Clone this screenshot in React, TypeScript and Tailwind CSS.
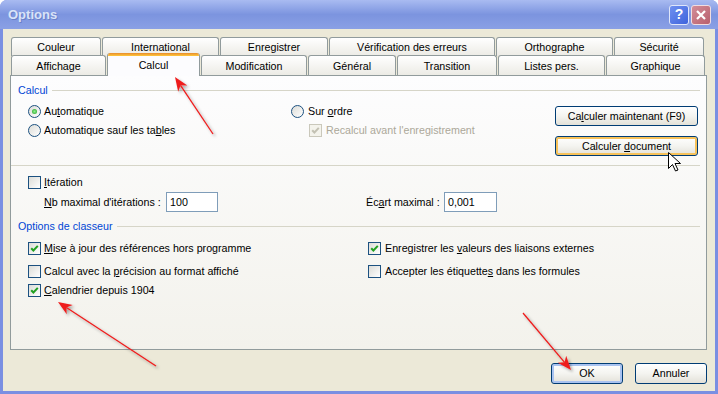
import React from "react";

function Box({ checked = false, disabled = false }: { checked?: boolean; disabled?: boolean }) {
  return (
    <span
      className={
        disabled
          ? "relative block w-[13px] h-[13px] shrink-0 border border-[#cac8bb] bg-[#f4f3ec]"
          : "relative block w-[13px] h-[13px] shrink-0 border border-[#1c5180] bg-gradient-to-br from-[#dcdcd7] to-white"
      }
    >
      {checked && (
        <svg className="absolute left-0 top-0" width="11" height="11" viewBox="0 0 11 11">
          <path
            d="M2.2 5.2 L4.4 7.5 L8.8 2.9"
            fill="none"
            stroke={disabled ? "#c3c1b3" : "#21a121"}
            strokeWidth="2"
          />
        </svg>
      )}
    </span>
  );
}

function Radio({ checked = false }: { checked?: boolean }) {
  return (
    <span className="relative block w-[13px] h-[13px] shrink-0 rounded-full border border-[#1c5180] bg-gradient-to-br from-[#dcdcd7] to-white">
      {checked && (
        <span className="absolute left-[3px] top-[3px] w-[5px] h-[5px] rounded-full bg-[radial-gradient(circle,#8ef08e,#1f9e1f)]" />
      )}
    </span>
  );
}

function Tab({ label, w, selected = false }: { label: string; w: string; selected?: boolean }) {
  if (selected) {
    return (
      <div className={`${w} relative z-20 h-[23px] -mb-[1px] shrink-0 flex flex-col rounded-t-[3px] overflow-hidden border-x border-[#919b9c] bg-[#fcfcfe]`}>
        <div className="h-[3px] bg-gradient-to-b from-[#e68b2c] to-[#ffc83c]" />
        <div className="flex-1 flex items-center justify-center pb-[1px]">{label}</div>
      </div>
    );
  }
  return (
    <div className={`${w} h-full shrink-0 flex items-center justify-center pt-[1px] rounded-t-[3px] border border-b-0 border-[#919b9c] bg-gradient-to-b from-white to-[#ecebe5]`}>
      {label}
    </div>
  );
}

function Btn({ children, cls }: { children: React.ReactNode; cls: string }) {
  return (
    <div className={`flex items-center justify-center rounded-[3px] border border-[#003c74] bg-gradient-to-b from-white via-[#f4f4f0] to-[#e3e1d8] ${cls}`}>
      {children}
    </div>
  );
}

function Arrow({ x1, y1, x2, y2 }: { x1: number; y1: number; x2: number; y2: number }) {
  const dx = x2 - x1;
  const dy = y2 - y1;
  const L = Math.hypot(dx, dy);
  const ux = dx / L;
  const uy = dy / L;
  const px = -uy;
  const py = ux;
  const hl = 14;
  const hw = 5.5;
  const bx = x2 - ux * hl;
  const by = y2 - uy * hl;
  const nx = x2 - ux * (hl - 4);
  const ny = y2 - uy * (hl - 4);
  const pts = `${x2},${y2} ${bx + px * hw},${by + py * hw} ${nx},${ny} ${bx - px * hw},${by - py * hw}`;
  return (
    <g filter="url(#sh)">
      <line x1={x1} y1={y1} x2={nx} y2={ny} stroke="#ee1c1c" strokeWidth="1.3" />
      <polygon points={pts} fill="#ee1c1c" />
    </g>
  );
}

export default function App() {
  return (
    <div className="relative w-[718px] h-[394px] flex flex-col overflow-hidden rounded-t-[7px] bg-[#7a8fe2] font-['Liberation_Sans',Arial,sans-serif] text-[10.7px] leading-[13px] text-black">
      {/* Title bar */}
      <div className="h-[29px] shrink-0 flex items-center pl-[8px] pr-[7px] bg-gradient-to-b from-[#a9bbf1] via-[#7c94df] to-[#8aa0e5]">
        <span className="font-bold text-[13px] text-[#d9e3f8] [text-shadow:1px_1px_0_#6a80c8]">Options</span>
        <div className="ml-auto flex gap-[2px]">
          <div className="w-[20px] h-[20px] rounded-[3px] border border-[#dfe6fa] bg-gradient-to-br from-[#6f90f0] to-[#3f63dc] flex items-center justify-center text-white font-bold text-[14px]">
            ?
          </div>
          <div className="w-[20px] h-[20px] rounded-[3px] border border-[#f0dde0] bg-gradient-to-br from-[#d38d98] to-[#b8606e] flex items-center justify-center">
            <svg width="12" height="12" viewBox="0 0 12 12">
              <path d="M2 2 L10 10 M10 2 L2 10" stroke="white" strokeWidth="2.2" />
            </svg>
          </div>
        </div>
      </div>

      {/* Client */}
      <div className="flex-1 mx-[3px] mb-[3px] bg-[#ece9d8] pt-[8px] pl-[7px] pr-[8px] flex flex-col">
        {/* Tabs */}
        <div className="pl-[1px] flex flex-col">
          <div className="flex gap-[1px] h-[19px]">
            <Tab label="Couleur" w="w-[90px]" />
            <Tab label="International" w="w-[117px]" />
            <Tab label="Enregistrer" w="w-[108px]" />
            <Tab label="Vérification des erreurs" w="w-[166px]" />
            <Tab label="Orthographe" w="w-[117px]" />
            <Tab label="Sécurité" w="w-[90px]" />
          </div>
          <div className="relative z-10 flex items-end gap-[1px] h-[20px] -mt-[1px]">
            <Tab label="Affichage" w="w-[95px]" />
            <Tab label="Calcul" w="w-[93px]" selected />
            <Tab label="Modification" w="w-[106px]" />
            <Tab label="Général" w="w-[88px]" />
            <Tab label="Transition" w="w-[100px]" />
            <Tab label="Listes pers." w="w-[107px]" />
            <Tab label="Graphique" w="w-[99px]" />
          </div>
        </div>

        {/* Panel */}
        <div className="h-[275px] shrink-0 border border-[#919b9c] bg-gradient-to-b from-[#fdfdfe] to-[#f3f2ec] flex flex-col pl-[7px] pr-[6px]">
          <div className="mt-[8px] h-[13px] flex items-center gap-[4px]">
            <span className="text-[#0046d5]">Calcul</span>
            <div className="flex-1 h-px bg-[#d6d5c8]" />
          </div>

          <div className="mt-[7px] flex">
            <div className="w-[273px] pl-[10px] flex flex-col gap-[4px]">
              <div className="h-[15px] flex items-center gap-[3px]">
                <Radio checked />
                <span>
                  Au<u>t</u>omatique
                </span>
              </div>
              <div className="h-[15px] flex items-center gap-[3px]">
                <Radio />
                <span>
                  Automatique sauf les ta<u>b</u>les
                </span>
              </div>
            </div>
            <div className="w-[264px] flex flex-col gap-[4px]">
              <div className="h-[15px] flex items-center gap-[4px]">
                <Radio />
                <span>
                  Sur <u>o</u>rdre
                </span>
              </div>
              <div className="h-[15px] pl-[18px] flex items-center gap-[4px] text-[#aca899]">
                <Box checked disabled />
                <span>Recalcul avant l'enregistrement</span>
              </div>
            </div>
            <div className="w-[143px] pt-[2px] flex flex-col gap-[10px]">
              <Btn cls="h-[20px]">
                <span>
                  Ca<u>l</u>culer maintenant (F9)
                </span>
              </Btn>
              <Btn cls="h-[20px] shadow-[inset_0_0_0_2px_#f7c25a]">
                <span>
                  Calculer <u>d</u>ocument
                </span>
              </Btn>
            </div>
          </div>

          <div className="mt-[9px] -ml-[7px] h-px bg-[#d6d5c8]" />

          <div className="mt-[10px] h-[13px] pl-[10px] flex items-center gap-[3px]">
            <Box />
            <span>
              <u>I</u>tération
            </span>
          </div>

          <div className="mt-[3px] h-[20px] flex items-center">
            <span className="pl-[26px] w-[148px] shrink-0">
              <u>N</u>b maximal d'itérations :
            </span>
            <div className="w-[52px] h-[20px] border border-[#7f9db9] bg-white flex items-center pl-[3px]">100</div>
            <span className="ml-[148px] w-[78px] shrink-0">
              Éc<u>a</u>rt maximal :
            </span>
            <div className="w-[53px] h-[20px] border border-[#7f9db9] bg-white flex items-center pl-[3px]">0,001</div>
          </div>

          <div className="mt-[8px] h-[13px] flex items-center gap-[5px]">
            <span className="text-[#0046d5]">Options de classeur</span>
            <div className="flex-1 h-px bg-[#d6d5c8]" />
          </div>

          <div className="mt-[8px] h-[15px] flex items-center">
            <div className="w-[350px] pl-[10px] flex items-center gap-[3px]">
              <Box checked />
              <span>
                <u>M</u>ise à jour des références hors programme
              </span>
            </div>
            <div className="flex items-center gap-[4px]">
              <Box checked />
              <span>
                Enregistrer les <u>v</u>aleurs des liaisons externes
              </span>
            </div>
          </div>
          <div className="mt-[8px] h-[15px] flex items-center">
            <div className="w-[350px] pl-[10px] flex items-center gap-[3px]">
              <Box />
              <span>
                Calcul avec la <u>p</u>récision au format affiché
              </span>
            </div>
            <div className="flex items-center gap-[4px]">
              <Box />
              <span>
                Accepter les étiquette<u>s</u> dans les formules
              </span>
            </div>
          </div>
          <div className="mt-[4px] h-[15px] flex items-center">
            <div className="w-[350px] pl-[10px] flex items-center gap-[3px]">
              <Box checked />
              <span>
                <u>C</u>alendrier depuis 1904
              </span>
            </div>
          </div>
        </div>

        {/* Footer buttons */}
        <div className="mt-[13px] flex justify-end gap-[12px]">
          <Btn cls="w-[72px] h-[21px] shadow-[inset_0_0_0_2px_#a9c3f0]">OK</Btn>
          <Btn cls="w-[72px] h-[21px]">Annuler</Btn>
        </div>
      </div>

      {/* Annotations overlay */}
      <svg className="absolute left-0 top-0 pointer-events-none" width="718" height="394" viewBox="0 0 718 394">
        <defs>
          <filter id="sh" x="-20%" y="-20%" width="140%" height="140%">
            <feDropShadow dx="2" dy="2" stdDeviation="1.5" floodColor="#000" floodOpacity="0.35" />
          </filter>
        </defs>
        <Arrow x1={213} y1={134} x2={175} y2={77} />
        <Arrow x1={156} y1={366} x2={58} y2={302} />
        <Arrow x1={523} y1={313} x2={571} y2={370} />
        <path
          d="M668.5 152.5 L668.5 168.5 L672.5 164.5 L675.5 171 L678 170 L675 163.5 L680.5 163.5 Z"
          fill="white"
          stroke="black"
          strokeWidth="1"
        />
      </svg>
    </div>
  );
}
